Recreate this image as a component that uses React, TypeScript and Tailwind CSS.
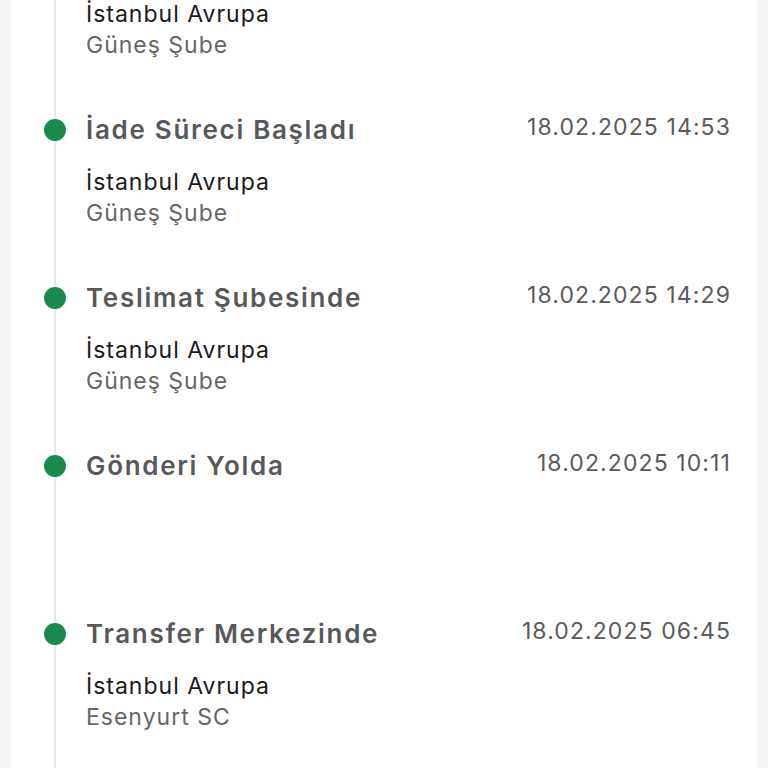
const events = [
  { title: "Şubeye Ulaştı", date: "18.02.2025 15:10", city: "İstanbul Avrupa", branch: "Güneş Şube" },
  { title: "İade Süreci Başladı", date: "18.02.2025 14:53", city: "İstanbul Avrupa", branch: "Güneş Şube" },
  { title: "Teslimat Şubesinde", date: "18.02.2025 14:29", city: "İstanbul Avrupa", branch: "Güneş Şube" },
  { title: "Gönderi Yolda", date: "18.02.2025 10:11", city: "", branch: "" },
  { title: "Transfer Merkezinde", date: "18.02.2025 06:45", city: "İstanbul Avrupa", branch: "Esenyurt SC" },
  { title: "Transfer Merkezinde", date: "17.02.2025 22:30", city: "İstanbul Avrupa", branch: "Hadımköy TM" },
];

export default function App() {
  return (
    <div
      className="h-screen overflow-hidden bg-[#f4f4f4] px-[11px]"
      style={{ fontFamily: "Inter, 'Noto Sans', sans-serif" }}
    >
      <div className="h-full overflow-hidden bg-white">
        <div className="ml-[43px] mt-[-54px] border-l-2 border-[#e6e6e6]">
          {events.map((e, i) => (
            <div key={i} className="relative h-[168px] pl-[30px] pr-[26px]">
              <span className="absolute left-[-12px] top-[5px] h-[22px] w-[22px] rounded-full bg-[#178a4c]" />
              <div className="flex items-start justify-between">
                <h3 className="text-[26px] font-semibold leading-[32px] tracking-[1.7px] text-[#58585a]">{e.title}</h3>
                <span className="mt-[-3px] text-[23px] leading-[32px] tracking-[1.1px] text-[#5a5a5a]">{e.date}</span>
              </div>
              {e.city && (
                <div className="mt-[21px] text-[23px] leading-[31px] tracking-[1px]">
                  <p className="text-[#1a1a1a]">{e.city}</p>
                  <p className="text-[#666666]">{e.branch}</p>
                </div>
              )}
            </div>
          ))}
        </div>
      </div>
    </div>
  );
}
